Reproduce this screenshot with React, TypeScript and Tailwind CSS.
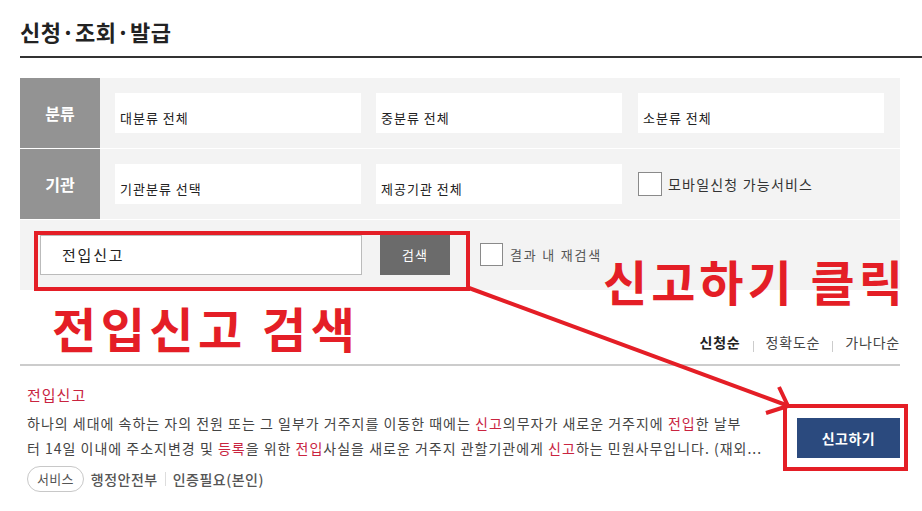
import React from "react";

function SelectBox({ children }: { children: React.ReactNode }) {
  return (
    <div className="flex h-[40px] w-[246px] items-center bg-white pl-[5px] pt-[10px] text-[13px] leading-[20px] tracking-[1px] text-[#222]">
      {children}
    </div>
  );
}

function CheckBox({ size }: { size: string }) {
  return <span className={"block shrink-0 border border-[#8a8a8a] bg-white " + size} />;
}

function Mark({ children }: { children: React.ReactNode }) {
  return <span className="text-[#c9243f]">{children}</span>;
}

export default function App() {
  return (
    <div className="relative h-[511px] w-[922px] overflow-hidden bg-white pl-[20px] font-['Noto_Sans_CJK_KR',sans-serif] text-[#333]">
      {/* title */}
      <div className="border-b-2 border-[#333] pt-[20px] pb-[13px]">
        <h1 className="text-[22px] font-bold leading-[23px] tracking-[0.5px] text-[#222]">신청·조회·발급</h1>
      </div>

      {/* filter panel */}
      <div className="mt-[20px] w-[880px] bg-[#f3f3f3]">
        <div className="flex h-[71px] border-b border-white">
          <div className="flex w-[80px] items-center justify-center bg-[#939393] text-[16px] font-bold text-white">분류</div>
          <div className="flex items-center gap-[15px] pl-[15px]">
            <SelectBox>대분류 전체</SelectBox>
            <SelectBox>중분류 전체</SelectBox>
            <div className="ml-px">
              <SelectBox>소분류 전체</SelectBox>
            </div>
          </div>
        </div>
        <div className="flex h-[71px] border-b border-white">
          <div className="flex w-[80px] items-center justify-center bg-[#939393] text-[16px] font-bold text-white">기관</div>
          <div className="flex items-center gap-[15px] pl-[15px]">
            <SelectBox>기관분류 선택</SelectBox>
            <SelectBox>제공기관 전체</SelectBox>
            <div className="ml-px flex items-center gap-[6px]">
              <CheckBox size="h-[24px] w-[24px]" />
              <span className="text-[14px] leading-[20px] tracking-[1.2px] text-[#333]">모바일신청 가능서비스</span>
            </div>
          </div>
        </div>
        <div className="flex h-[70px] items-start pl-[20px] pt-[15px]">
          <div className="flex h-[40px] w-[322px] items-center border border-[#bbb] bg-white pl-[21px] text-[15px] tracking-[1.8px] text-[#222]">전입신고</div>
          <button className="ml-[18px] h-[40px] w-[70px] bg-[#6b6b6b] text-[13px] tracking-[1px] text-white">검색</button>
          <div className="ml-[30px] mt-[8px] flex items-center gap-[7px]">
            <CheckBox size="h-[23px] w-[23px]" />
            <span className="text-[13px] leading-[20px] tracking-[1.8px] text-[#555]">결과 내 재검색</span>
          </div>
        </div>
      </div>

      {/* sort */}
      <div className="flex h-[76px] w-[880px] items-end justify-end border-b-2 border-[#ccc] pb-[12px] text-[14px] leading-[20px] tracking-[0.8px]">
        <span className="font-bold text-[#222]">신청순</span>
        <span className="mx-[12px] h-[11px] w-px bg-[#ccc]" />
        <span className="text-[#444]">정확도순</span>
        <span className="mx-[12px] h-[11px] w-px bg-[#ccc]" />
        <span className="text-[#444]">가나다순</span>
      </div>

      {/* result */}
      <div className="flex w-[880px] justify-between">
        <div className="pl-[7px] pt-[19px]">
          <div className="text-[15px] leading-[20px] tracking-[1px] text-[#c9243f]">전입신고</div>
          <div className="mt-[6px] whitespace-nowrap text-[14px] leading-[25px] tracking-[1px] text-[#444]">
            <div>
              하나의 세대에 속하는 자의 전원 또는 그 일부가 거주지를 이동한 때에는 <Mark>신고</Mark>의무자가 새로운 거주지에 <Mark>전입</Mark>한 날부
            </div>
            <div>
              터 14일 이내에 주소지변경 및 <Mark>등록</Mark>을 위한 <Mark>전입</Mark>사실을 새로운 거주지 관할기관에게 <Mark>신고</Mark>하는 민원사무입니다. (재외...
            </div>
          </div>
          <div className="mt-[5px] flex items-center">
            <span className="flex h-[26px] items-center rounded-full border border-[#c8c8c8] px-[9px] text-[13px] tracking-[0.3px] text-[#555]">서비스</span>
            <span className="ml-[7px] text-[14px] font-medium tracking-[0.5px] text-[#555]">행정안전부</span>
            <span className="mx-[7px] h-[14px] w-px bg-[#ddd]" />
            <span className="text-[14px] font-medium tracking-[0.5px] text-[#555]">인증필요(본인)</span>
          </div>
        </div>
        <button className="mt-[52px] h-[40px] w-[103px] bg-[#2b4a7e] text-[14px] font-bold tracking-[0.5px] text-white">신고하기</button>
      </div>

      {/* annotations */}
      <div className="absolute left-[34px] top-[231px] h-[60px] w-[436px] border-[4px] border-[#e41e26]" />
      <div className="absolute left-[783px] top-[404px] h-[67px] w-[125px] border-[4px] border-[#e41e26]" />
      <svg className="pointer-events-none absolute inset-0" width="922" height="511">
        <line x1="469" y1="288" x2="786" y2="405" stroke="#e41e26" strokeWidth="4" />
        <polyline points="779,387 788,406 766,413" fill="none" stroke="#e41e26" strokeWidth="4" strokeLinejoin="miter" />
      </svg>
      <div className="absolute left-[603px] top-[252px] text-[48px] font-bold leading-[56px] tracking-[4px] text-[#e41e26]">신고하기 클릭</div>
      <div className="absolute left-[52px] top-[299px] text-[48px] font-bold leading-[56px] tracking-[4.5px] text-[#e41e26]">전입신고 검색</div>
    </div>
  );
}
